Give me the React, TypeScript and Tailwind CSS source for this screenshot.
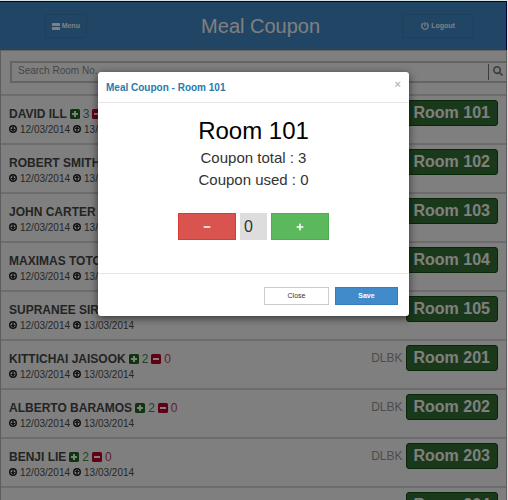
import React, { useState } from 'react'
import { FaMinus, FaPlus, FaPowerOff, FaSearch } from 'react-icons/fa'

type Guest = {
    name: string
    room: string
    total: number
    used: number
}

const guests: Guest[] = [
    { name: 'DAVID ILL', room: '101', total: 3, used: 0 },
    { name: 'ROBERT SMITH', room: '102', total: 2, used: 0 },
    { name: 'JOHN CARTER', room: '103', total: 2, used: 0 },
    { name: 'MAXIMAS TOTO', room: '104', total: 2, used: 0 },
    { name: 'SUPRANEE SIRI', room: '105', total: 2, used: 0 },
    { name: 'KITTICHAI JAISOOK', room: '201', total: 2, used: 0 },
    { name: 'ALBERTO BARAMOS', room: '202', total: 2, used: 0 },
    { name: 'BENJI LIE', room: '203', total: 2, used: 0 },
    { name: '', room: '204', total: 2, used: 0 },
]

function MenuIcon() {
    return (
        <svg viewBox="0 0 16 14" className="h-[7px] w-2" fill="currentColor" aria-hidden="true">
            <rect x="0" y="0" width="16" height="6" rx="1" />
            <rect x="0" y="8" width="16" height="6" rx="1" />
        </svg>
    )
}

function PlusSquare() {
    return (
        <svg viewBox="0 0 20 20" className="size-2.5 text-[#1f6b1f]" aria-hidden="true">
            <rect width="20" height="20" rx="3" fill="currentColor" />
            <path d="M8 4h4v4h4v4h-4v4H8v-4H4V8h4z" fill="#fff" />
        </svg>
    )
}

function MinusSquare() {
    return (
        <svg viewBox="0 0 20 20" className="size-2.5 text-[#c00028]" aria-hidden="true">
            <rect width="20" height="20" rx="3" fill="currentColor" />
            <path d="M4 8h12v4H4z" fill="#fff" />
        </svg>
    )
}

function ArrivalIcon() {
    return (
        <svg viewBox="0 0 16 16" className="size-2 text-[#222222]" aria-hidden="true">
            <circle cx="8" cy="8" r="6.5" fill="none" stroke="currentColor" strokeWidth="3" />
            <path d="M6.5 3h3v5H13l-5 5-5-5h3.5z" fill="currentColor" />
        </svg>
    )
}

function DepartureIcon() {
    return (
        <svg viewBox="0 0 16 16" className="size-2 text-[#222222]" aria-hidden="true">
            <circle cx="8" cy="8" r="6.5" fill="none" stroke="currentColor" strokeWidth="3" />
            <path d="M8 3l5 5H9.5v5h-3V8H3z" fill="currentColor" />
        </svg>
    )
}

function GuestRow({ guest }: { guest: Guest }) {
    return (
        <li className="flex h-[49px] items-start justify-between border-t-2 border-[#d8d8d8] px-2">
            <div className="pt-2.5">
                {guest.name && (
                    <>
                        <div className="flex h-[15px] items-center gap-[3px] text-[12px]">
                            <span className="font-bold text-[#484848]">{guest.name}</span>
                            <PlusSquare />
                            <span className="text-[#4c864d]">{guest.total}</span>
                            <MinusSquare />
                            <span className="text-[#c9405a]">{guest.used}</span>
                        </div>
                        <div className="flex h-4 items-center gap-[3px] text-[10px] text-[#505050]">
                            <ArrivalIcon />
                            <span>12/03/2014</span>
                            <DepartureIcon />
                            <span>13/03/2014</span>
                        </div>
                    </>
                )}
            </div>
            <div className="flex items-center gap-[3px] pt-1">
                <span className="text-[12px] text-[#999999]">DLBK</span>
                <button type="button" className="h-[26px] rounded-[3px] border border-[#104f10] bg-[#347234] px-[7px] text-[16px] leading-[22px] font-bold text-white">
                    Room {guest.room}
                </button>
            </div>
        </li>
    )
}

export default function App() {
    const [used, setUsed] = useState(0)
    const [open, setOpen] = useState(true)

    return (
        <div className="h-screen overflow-hidden bg-[#dbe4e1] pt-px pr-px font-['Liberation_Sans',Arial,sans-serif]">
            <div className="relative h-full overflow-hidden bg-white">
                <div className="border-t border-r border-[#000070]">
                    <header className="grid h-12 grid-cols-[26%_1fr_23%] items-center bg-[#428bca] text-white">
                        <button type="button" className="flex h-6 w-[42px] items-center justify-center gap-0.5 justify-self-center border border-[#3a80bd] text-[7px] font-bold">
                            <MenuIcon />
                            Menu
                        </button>
                        <h1 className="text-center text-[20px]">Meal Coupon</h1>
                        <button type="button" className="mr-8 flex h-6 w-[72px] items-center justify-center gap-0.5 justify-self-end border border-[#3a80bd] text-[7px] font-bold">
                            <FaPowerOff className="size-2" />
                            Logout
                        </button>
                    </header>
                </div>

                <div className="border-x border-[#bbbbbb]">
                    <div className="border-t border-[#cccccc] pt-2.5 pb-[11px] pl-[9px]">
                        <form className="flex h-[22px] items-center border-y-2 border-l-2 border-[#c8c8c8]">
                            <input type="text" placeholder="Search Room No..." aria-label="Search Room No" className="h-full min-w-0 flex-1 px-1.5 pb-1 text-[10px] outline-none placeholder:text-[#8c8c8c]" />
                            <button type="button" aria-label="Search" className="flex h-4 items-center border-l border-[#777777] pr-[3px] pl-1 pb-0.5">
                                <FaSearch className="size-2.5 text-[#777777]" />
                            </button>
                        </form>
                    </div>

                    <ul>
                        {guests.map((guest) => (
                            <GuestRow key={guest.room} guest={guest} />
                        ))}
                    </ul>
                </div>

                {open && (
                    <div className="absolute inset-0 bg-black/50 pt-[71px]">
                        <div role="dialog" aria-labelledby="coupon-title" className="mx-auto w-[311px] rounded-[3px] bg-white shadow-[0_2px_8px_rgba(0,0,0,0.6)]">
                            <div className="flex h-[31px] items-center justify-between border-b border-[#e5e5e5] px-2">
                                <h2 id="coupon-title" className="text-[10px] font-bold text-[#2a7aad]">Meal Coupon - Room 101</h2>
                                <button type="button" aria-label="Close dialog" onClick={() => setOpen(false)} className="pb-1.5 text-[11px] font-bold text-[#bbbbbb]">×</button>
                            </div>

                            <div className="flex h-[170px] flex-col items-center pt-3 text-[#333333]">
                                <p className="text-[24px] leading-8 text-black">Room 101</p>
                                <p className="text-[15px] leading-[22px]">Coupon total : 3</p>
                                <p className="text-[15px] leading-[22px]">Coupon used : {used}</p>
                                <div className="mt-[22px] flex h-[27px] gap-1">
                                    <button type="button" aria-label="Decrease" onClick={() => setUsed(Math.max(0, used - 1))} className="flex w-[58px] items-center justify-center border border-[#dc3a35] bg-[#d9534f] text-white">
                                        <FaMinus className="size-2" />
                                    </button>
                                    <output className="w-[27px] bg-[#dddddd] pl-1 text-[16px] leading-[27px]">{used}</output>
                                    <button type="button" aria-label="Increase" onClick={() => setUsed(used + 1)} className="flex w-[58px] items-center justify-center border border-[#4cae4c] bg-[#5cb85c] text-white">
                                        <FaPlus className="size-2" />
                                    </button>
                                </div>
                            </div>

                            <div className="flex h-[43px] items-center justify-end gap-1.5 border-t border-[#e5e5e5] pt-0.5 pr-[11px]">
                                <button type="button" onClick={() => setOpen(false)} className="h-[18px] w-[65px] border border-[#cccccc] text-[7px] text-[#333333]">Close</button>
                                <button type="button" onClick={() => setOpen(false)} className="h-[18px] w-[63px] border border-[#357ebd] bg-[#428bca] text-[7px] font-bold text-white">Save</button>
                            </div>
                        </div>
                    </div>
                )}
            </div>
        </div>
    )
}
